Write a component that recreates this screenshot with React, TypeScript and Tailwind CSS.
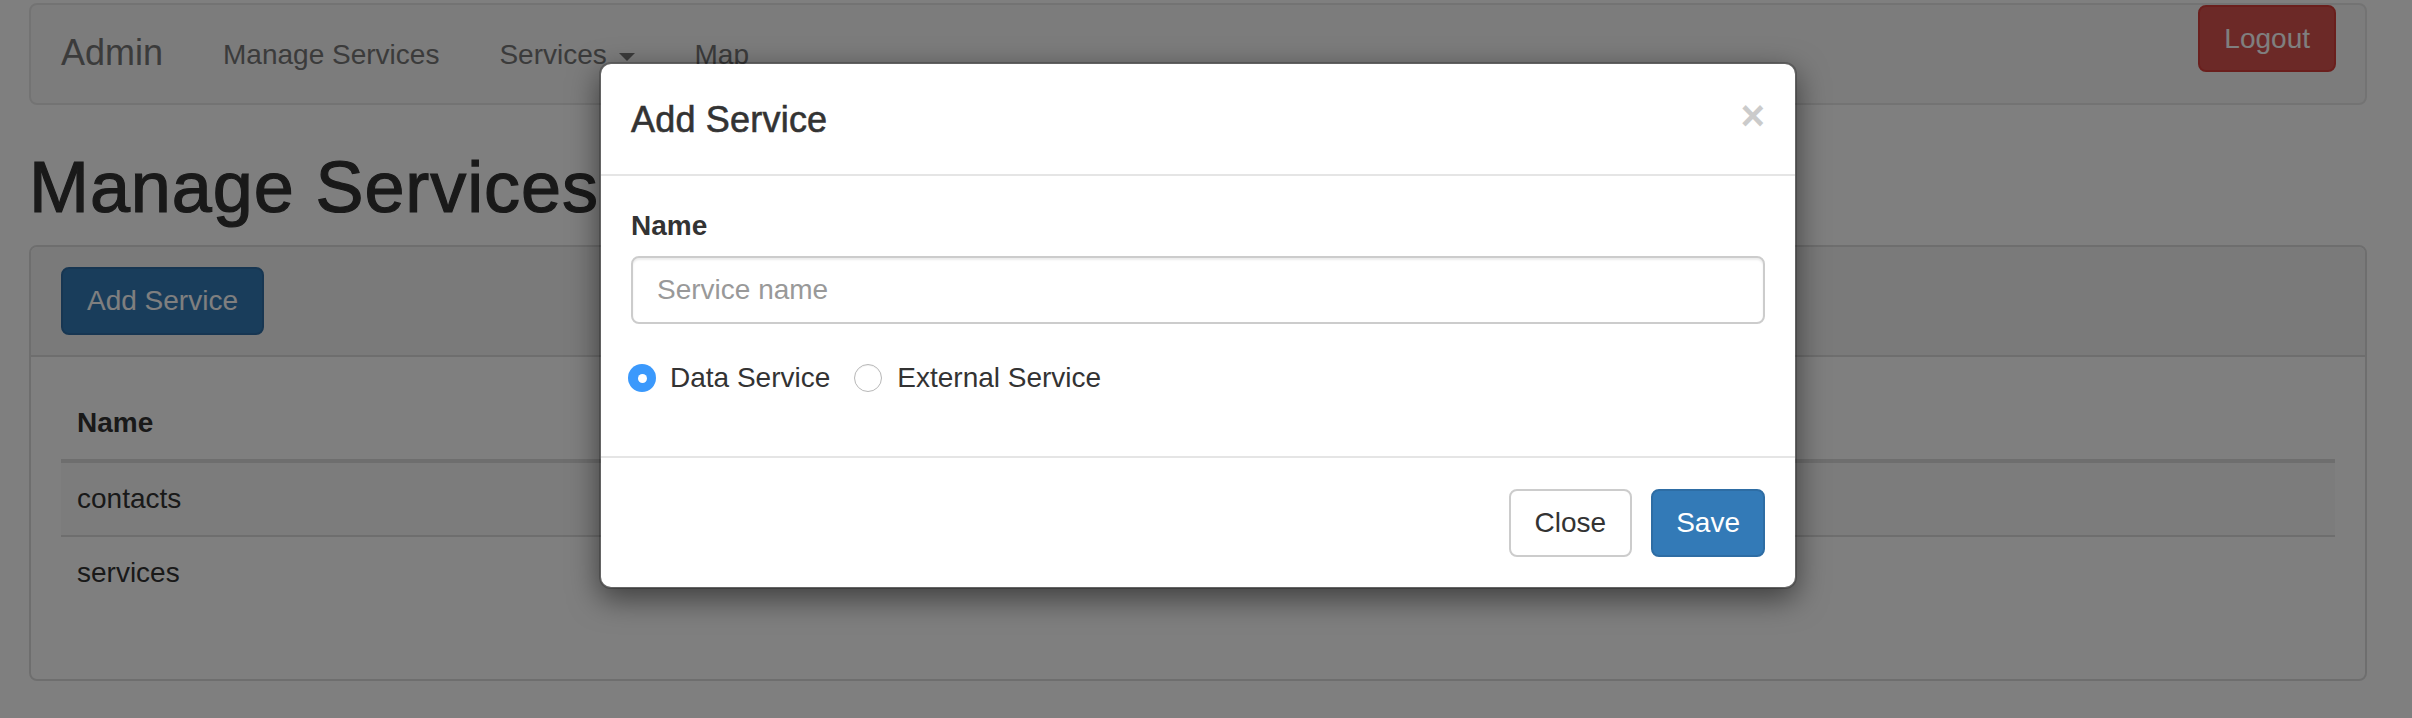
import React from "react";

export default function App() {
  return (
    <div className="relative w-[2412px] h-[718px] overflow-hidden bg-white font-['Liberation_Sans',Arial,sans-serif] text-[28px] leading-[40px] text-[#333]">
      {/* Page */}
      <div className="w-[2396px] px-[29px] pt-[3px]">
        <nav className="flex h-[102px] items-start rounded-[8px] border-2 border-[#e7e7e7] bg-[#f8f8f8]">
          <a className="px-[30px] pt-[28px] pb-[30px] text-[36px] leading-[40px] text-[#777]">Admin</a>
          <ul className="flex">
            <li>
              <a className="block px-[30px] py-[30px] leading-[40px] text-[#777]">Manage Services</a>
            </li>
            <li>
              <a className="block px-[30px] py-[30px] leading-[40px] text-[#777]">
                Services{" "}
                <span className="ml-[4px] inline-block h-0 w-0 border-x-[8px] border-t-[8px] border-x-transparent border-t-[#777] align-middle" />
              </a>
            </li>
            <li>
              <a className="block px-[30px] py-[30px] leading-[40px] text-[#777]">Map</a>
            </li>
          </ul>
          <button className="ml-auto mr-[29px] h-[67px] rounded-[8px] border-2 border-[#d43f3a] bg-[#d9534f] px-[24px] leading-[40px] text-white">
            Logout
          </button>
        </nav>

        <h1 className="mt-[43px] mb-[18px] text-[72px] font-normal leading-[79px] tracking-[0.9px] text-[#333] [-webkit-text-stroke:1.2px_#333]">
          Manage Services
        </h1>

        <div className="rounded-[8px] border-2 border-[#ddd]">
          <div className="rounded-t-[6px] border-b-2 border-[#ddd] bg-[#f5f5f5] px-[30px] py-[20px]">
            <button className="h-[68px] rounded-[8px] border-2 border-[#2e6da4] bg-[#337ab7] px-[24px] leading-[40px] text-white">
              Add Service
            </button>
          </div>
          <div className="px-[30px] pt-[30px] pb-[70px]">
            <table className="w-full border-separate border-spacing-0">
              <thead>
                <tr>
                  <th className="border-b-4 border-[#ddd] px-[16px] py-[16px] text-left font-bold leading-[40px]">Name</th>
                </tr>
              </thead>
              <tbody>
                <tr className="bg-[#f9f9f9]">
                  <td className="px-[16px] py-[16px] leading-[40px]">contacts</td>
                </tr>
                <tr>
                  <td className="border-t-2 border-[#ddd] px-[16px] py-[16px] leading-[40px]">services</td>
                </tr>
              </tbody>
            </table>
          </div>
        </div>
      </div>

      {/* Backdrop */}
      <div className="absolute inset-0 bg-black/50" />

      {/* Modal */}
      <div className="absolute left-[599px] top-[62px] w-[1198px] rounded-[12px] border-2 border-black/20 bg-white bg-clip-padding shadow-[0_10px_30px_rgba(0,0,0,0.5)]">
        <div className="flex items-start justify-between border-b-2 border-[#e5e5e5] px-[30px] pt-[30px] pb-[29px]">
          <h4 className="m-0 text-[36px] font-normal leading-[51px] tracking-[0.2px] text-[#333] [-webkit-text-stroke:0.6px_#333]">
            Add Service
          </h4>
          <button className="mt-[1px] text-[42px] font-bold leading-[42px] text-black opacity-20">×</button>
        </div>
        <div className="px-[30px] pt-[30px] pb-[58px]">
          <label className="mb-[10px] block font-bold leading-[40px]">Name</label>
          <input
            readOnly
            placeholder="Service name"
            className="block h-[68px] w-full rounded-[8px] border-2 border-[#ccc] px-[24px] text-[28px] text-[#555] shadow-[inset_0_2px_2px_rgba(0,0,0,0.075)] outline-none placeholder:text-[#999]"
          />
          <div className="mt-[34px] -ml-[3px] flex h-[40px] items-center">
            <span className="flex h-[28px] w-[28px] items-center justify-center rounded-full bg-[#3b99fc]">
              <span className="h-[9px] w-[9px] rounded-full bg-white" />
            </span>
            <span className="ml-[14px]">Data Service</span>
            <span className="ml-[24px] h-[28px] w-[28px] rounded-full border-[1.5px] border-[#b8b8b8] bg-white shadow-[inset_0_1px_1px_rgba(0,0,0,0.05)]" />
            <span className="ml-[15px]">External Service</span>
          </div>
        </div>
        <div className="flex justify-end gap-[19px] border-t-2 border-[#e5e5e5] px-[30px] pt-[31px] pb-[30px]">
          <button className="h-[68px] rounded-[8px] border-2 border-[#ccc] bg-white px-[24px] leading-[40px] text-[#333]">
            Close
          </button>
          <button className="h-[68px] rounded-[8px] border-2 border-[#2e6da4] bg-[#337ab7] px-[23px] leading-[40px] text-white">
            Save
          </button>
        </div>
      </div>
    </div>
  );
}
